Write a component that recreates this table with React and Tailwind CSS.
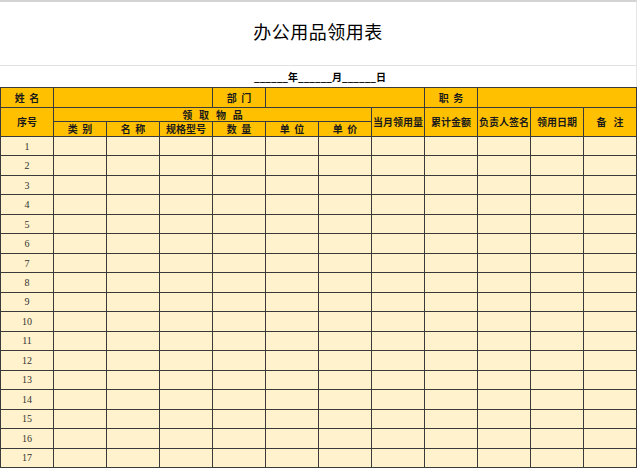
import React from "react";

const font = { fontFamily: '"Noto Sans CJK SC", "Noto Sans", sans-serif' };

const head = "bg-[#ffc000] flex items-center justify-center text-[10px] font-bold text-[#1a1a1a] leading-none";
const cell = "bg-[#fff2cc]";

export default function App() {
  const rows = Array.from({ length: 17 }, (_, i) => i + 1);

  return (
    <div className="w-[640px] h-[473px] bg-white overflow-hidden" style={font}>
      <div className="w-[637px] h-[66px] border-t-2 border-t-[#d4d4d4] border-b border-b-[#e2e2e2] border-r border-r-[#e6e6e6] flex items-center justify-center">
        <h1 className="text-[18px] text-black tracking-[0.5px] pb-1">办公用品领用表</h1>
      </div>
      <div className="w-[637px] h-[21px] border-r border-r-[#e6e6e6] flex items-center justify-center text-[10px] font-bold text-black pl-1 pb-px">
        ______年______月______日
      </div>

      <div className="grid w-[637px] grid-cols-[repeat(12,52px)] grid-rows-[19px_13px_14px_repeat(17,18.47px)] gap-px bg-[#3a3a3a] border border-[#3a3a3a]">
        <div className={head}>姓&nbsp;&nbsp;名</div>
        <div className={`${head} col-span-3`}></div>
        <div className={head}>部&nbsp;&nbsp;门</div>
        <div className={`${head} col-span-3`}></div>
        <div className={head}>职&nbsp;&nbsp;务</div>
        <div className={`${head} col-span-3`}></div>

        <div className={`${head} row-span-2`}>序号</div>
        <div className={`${head} col-span-6`}>领&nbsp;&nbsp;&nbsp;取&nbsp;&nbsp;&nbsp;物&nbsp;&nbsp;&nbsp;品</div>
        <div className={`${head} row-span-2`}>当月领用量</div>
        <div className={`${head} row-span-2`}>累计金额</div>
        <div className={`${head} row-span-2`}>负责人签名</div>
        <div className={`${head} row-span-2`}>领用日期</div>
        <div className={`${head} row-span-2`}>备&nbsp;&nbsp;&nbsp;注</div>
        <div className={head}>类&nbsp;&nbsp;别</div>
        <div className={head}>名&nbsp;&nbsp;称</div>
        <div className={head}>规格型号</div>
        <div className={head}>数&nbsp;&nbsp;量</div>
        <div className={head}>单&nbsp;&nbsp;位</div>
        <div className={head}>单&nbsp;&nbsp;价</div>

        {rows.map((n) => (
          <React.Fragment key={n}>
            <div className={`${cell} flex items-center justify-center text-[10px] text-[#333] font-['Liberation_Serif',serif]`}>
              {n}
            </div>
            {Array.from({ length: 11 }, (_, j) => (
              <div key={j} className={cell}></div>
            ))}
          </React.Fragment>
        ))}
      </div>
    </div>
  );
}
